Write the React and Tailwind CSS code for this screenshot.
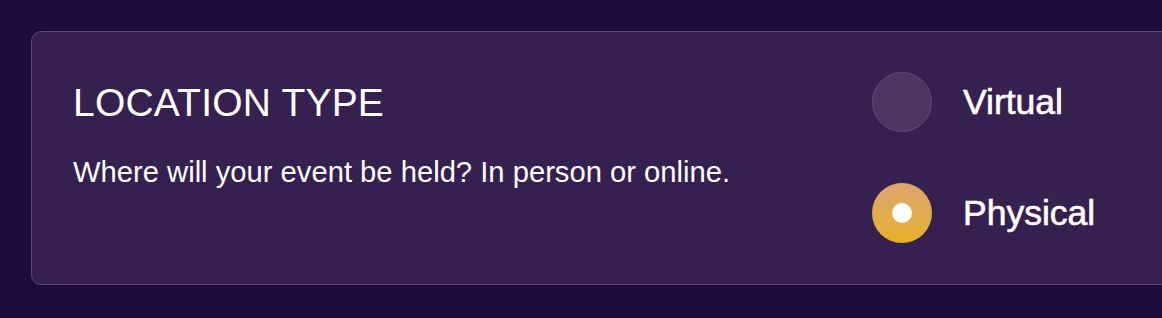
export default function App() {
  const options = [
    { label: 'Virtual', checked: false },
    { label: 'Physical', checked: true },
  ]

  return (
    <div className="w-full h-[318px] overflow-hidden bg-[#1f0a3d] pt-[31px] pl-[31px] font-['Liberation_Sans',Arial,sans-serif] text-white">
      <div className="flex w-[1200px] h-[254px] rounded-[10px] border border-[#5b4677] bg-[#362050]">
        <div className="w-[840px] pl-[41px] pt-[51px]">
          <h2 className="text-[39px] leading-[39px] tracking-[0.2px]">LOCATION TYPE</h2>
          <p className="mt-[36px] text-[29.2px] leading-[29px]">
            Where will your event be held? In person or online.
          </p>
        </div>
        <div className="flex flex-col gap-[51px] pt-[40px]">
          {options.map(opt => (
            <label key={opt.label} className="flex items-center gap-[31px] cursor-pointer">
              {opt.checked ? (
                <span className="flex items-center justify-center w-[60px] h-[60px] rounded-full bg-gradient-to-b from-[#dca46e] to-[#e6b21a]">
                  <span className="w-[20px] h-[20px] rounded-full bg-white" />
                </span>
              ) : (
                <span className="w-[60px] h-[60px] rounded-full bg-[#4a3563] border-[1.5px] border-[#604c7b]" />
              )}
              <span className="text-[35.5px] leading-[35px] [-webkit-text-stroke:0.6px_white]">{opt.label}</span>
            </label>
          ))}
        </div>
      </div>
    </div>
  )
}
